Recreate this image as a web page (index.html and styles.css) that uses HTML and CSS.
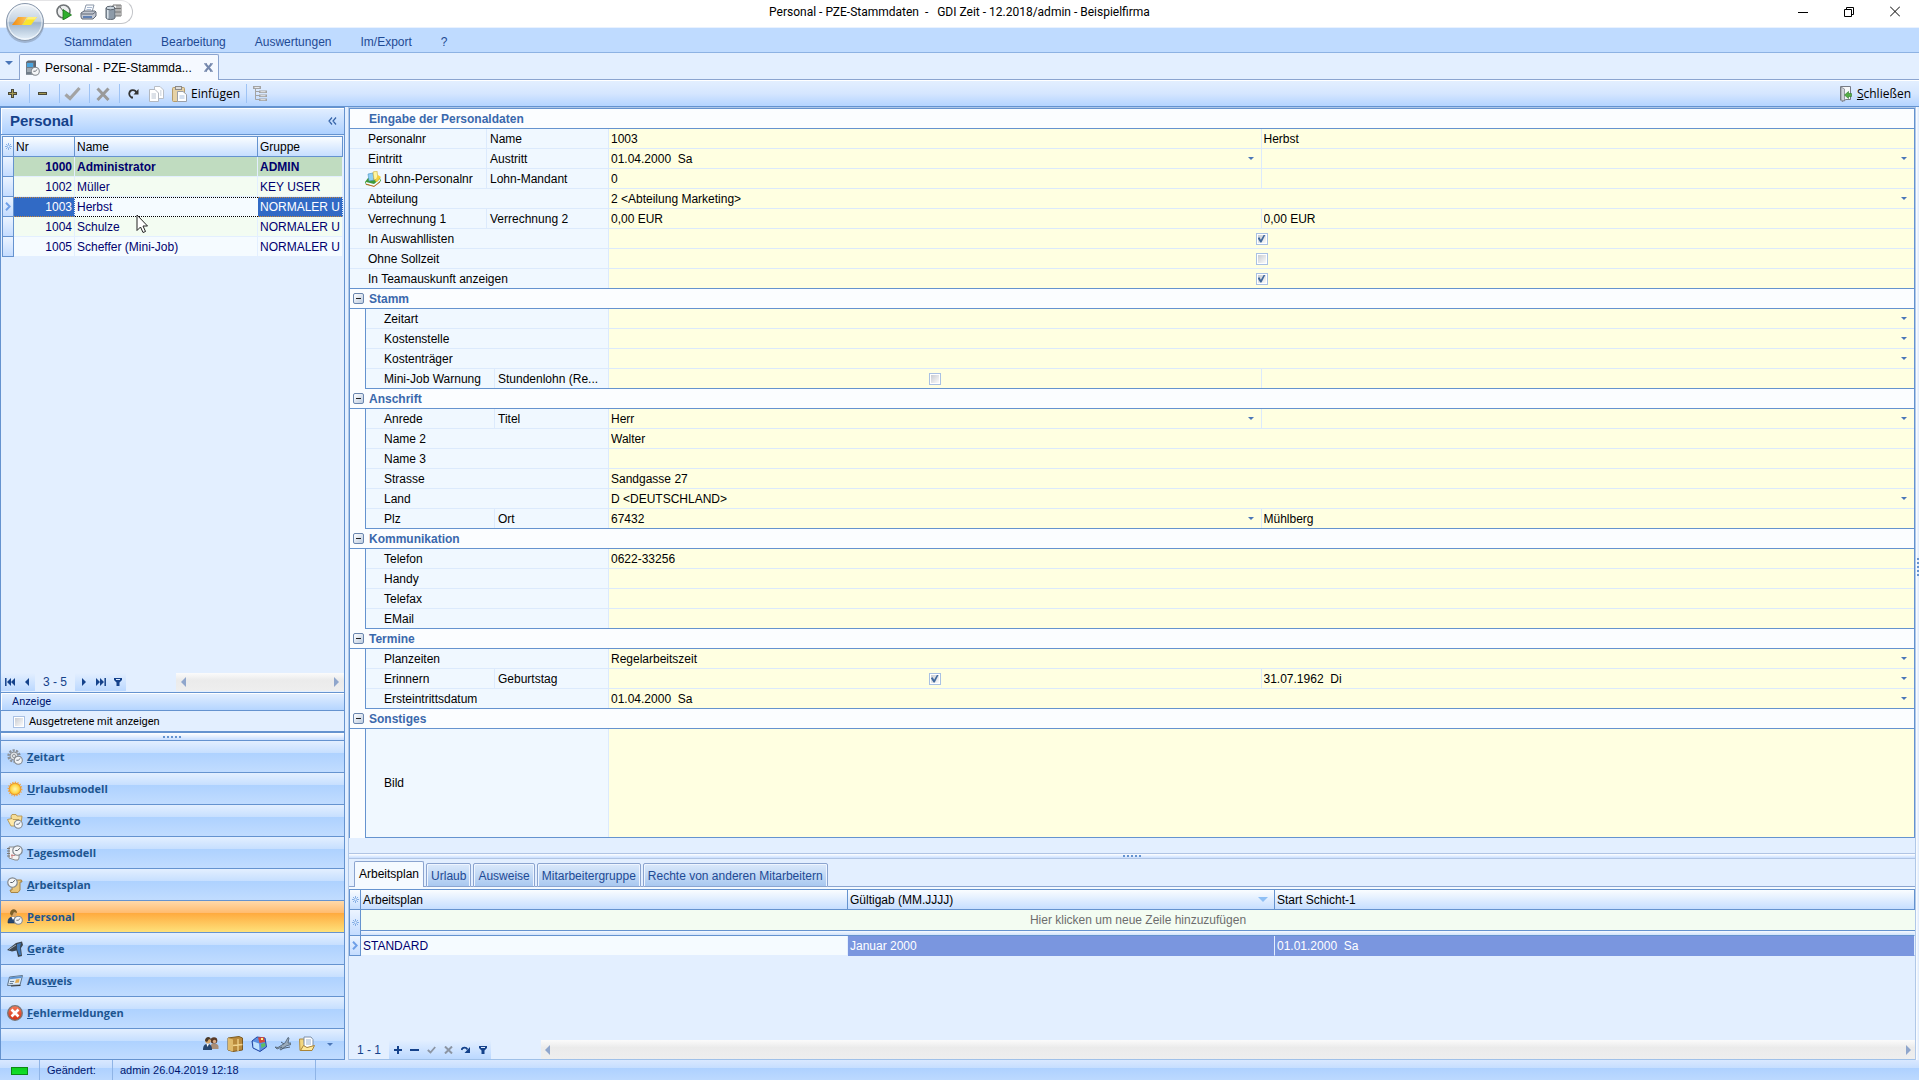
FILE: index.html
```html
<!DOCTYPE html>
<html lang="de">
<head>
<meta charset="utf-8">
<title>Personal - PZE-Stammdaten - GDI Zeit</title>
<link rel="stylesheet" href="styles.css">
</head>
<body>
<svg class="defs" aria-hidden="true">
  <defs>
    <linearGradient id="gSteel" x1="0" y1="0" x2="0" y2="1"><stop offset="0" stop-color="#f2f6fa"/><stop offset=".48" stop-color="#c3d1e0"/><stop offset=".52" stop-color="#9db3cb"/><stop offset="1" stop-color="#e8f3fc"/></linearGradient>
    <linearGradient id="gOrange"><stop offset="0" stop-color="#f08a10"/><stop offset="1" stop-color="#ffc65a"/></linearGradient>
    <radialGradient id="gSun"><stop offset="0" stop-color="#fff6b0"/><stop offset=".7" stop-color="#ffd84a"/><stop offset="1" stop-color="#f5a623"/></radialGradient>
    <linearGradient id="gRed" x1="0" y1="0" x2="0" y2="1"><stop offset="0" stop-color="#f47a5a"/><stop offset="1" stop-color="#d22f12"/></linearGradient>
  </defs>
  <symbol id="clock" viewBox="0 0 10 10"><circle cx="5" cy="5" r="4.3" fill="#f3f5f7" stroke="#82888f" stroke-width="1.1"/><path d="M5 5L7.2 3M5 5H3" stroke="#555c66" stroke-width=".9" fill="none"/></symbol>
  <symbol id="star" viewBox="0 0 7 7"><path d="M3.5 0V7M0 3.5H7M1 1L6 6M6 1L1 6" stroke="#6f9fe0" stroke-width=".8"/><rect x="2.5" y="2.5" width="2" height="2" fill="#e3efff"/></symbol>
  <symbol id="chev" viewBox="0 0 6 9"><path d="M1 .8L4.7 4.5L1 8.2" stroke="#6f9fe8" stroke-width="2" fill="none"/></symbol>
  <symbol id="funnel" viewBox="0 0 8 8"><path d="M0 0H8V2L5.500 4.500V8H2.500V4.500L0 2Z" fill="#15428b"/><path d="M2 1.500H6" stroke="#dceaff" stroke-width="1"/></symbol>
</svg>

<header class="titlebar">
  <button class="orb" aria-label="Anwendungsmenü">
    <svg width="40" height="42" viewBox="0 0 40 42"><ellipse cx="20" cy="22" rx="19" ry="19" fill="#7d8ea5" opacity=".5"/><circle cx="20" cy="20" r="18.500" fill="url(#gSteel)" stroke="#8998ac"/><circle cx="20" cy="20" r="17" fill="none" stroke="#fff" stroke-opacity=".7"/><path d="M13 15H22L17 23H7Z" fill="url(#gOrange)"/><path d="M23 15H32L26 23H17Z" fill="#fbe42c"/><path d="M23 15H32L30 17.500H21.500Z" fill="#fff07a"/></svg>
  </button>
  <div class="quick">
    <button aria-label="Start"><svg width="16" height="16" viewBox="0 0 16 16"><circle cx="7.500" cy="7.500" r="6.500" fill="#eceeef" stroke="#6f7376" stroke-width="1.600"/><path d="M7.500 7.500L4 3" stroke="#666" /><path d="M7 5.500L15.500 11L7 16Z" fill="#2eae2e" stroke="#157515" stroke-width=".8"/></svg></button>
    <button aria-label="Drucken"><svg width="17" height="16" viewBox="0 0 17 16"><path d="M6 1L14 1L12 8H4Z" fill="#fafcff" stroke="#8b97a8"/><path d="M7 3.500H12M6.500 5.500H11" stroke="#a9b9d0"/><path d="M1 9L4 7H15L16 8V12L13 15H2L1 13Z" fill="#c3c8d2" stroke="#5f6775"/><path d="M1.500 10H13L15.500 8" stroke="#5f6775" fill="none"/><path d="M3 13H12" stroke="#3f69a8" stroke-width="1.500"/></svg></button>
    <button aria-label="Datenbank"><svg width="17" height="16" viewBox="0 0 17 16"><path d="M8 1H16V12H8Z" fill="#f3f3f3" stroke="#777"/><path d="M8 4.500H16M8 8H16M12 1V12M14 1V12" stroke="#777"/><path d="M1 4V14C2 16 9 16 10 14V4Z" fill="#8d9aa8" stroke="#5d6670"/><path d="M2.800 5V14.500" stroke="#dfe8ef" stroke-width="1.500"/><ellipse cx="5.500" cy="4" rx="4.500" ry="1.800" fill="#c9d3dc" stroke="#5d6670"/></svg></button>
  </div>
  <h1>Personal - PZE-Stammdaten &nbsp;- &nbsp; GDI Zeit - 12.2018/admin - Beispielfirma</h1>
  <div class="winbtns">
    <button aria-label="Minimieren"><svg width="10" height="11" viewBox="0 0 10 11"><path d="M0 6.500H10" stroke="#000"/></svg></button>
    <button aria-label="Verkleinern"><svg width="10" height="11" viewBox="0 0 10 11"><path d="M.5 3.500H7.500V10.500H.5ZM2.500 3V1.500H9.500V8.500H8" stroke="#000" fill="none"/></svg></button>
    <button aria-label="Schließen"><svg width="10" height="11" viewBox="0 0 10 11"><path d="M0 .5L10 10.500M10 .5L0 10.500" stroke="#000"/></svg></button>
  </div>
</header>

<nav class="menu"><a href="#">Stammdaten</a><a href="#">Bearbeitung</a><a href="#">Auswertungen</a><a href="#">Im/Export</a><a href="#">?</a></nav>

<div class="doctabs">
  <button class="doclist" aria-label="Fensterliste"><i class="tri-down"></i></button>
  <div class="doctab">
    <svg width="15" height="16" viewBox="0 0 15 16"><path d="M1 2L3 .5H11V12L9 14.500H1Z" fill="#5a6470"/><path d="M1 2.500H9V14.500H1Z" fill="#6f7c89"/><path d="M2 3H8V7H2Z" fill="#4aa3dd"/><path d="M2 9H8M2 11H8" stroke="#cbd3da"/><use href="#clock" x="5.500" y="6.500" width="9.500" height="9.500"/></svg>
    <span>Personal - PZE-Stammda...</span>
    <button aria-label="Tab schließen"><svg width="9" height="9" viewBox="0 0 9 9"><path d="M1.500 1L7.500 8M7.500 1L1.500 8" stroke="#7487ac" stroke-width="2"/><path d="M0 .8H3M6 .8H9M0 8.200H3M6 8.200H9" stroke="#7487ac"/></svg></button>
  </div>
  <div class="fill"></div>
</div>

<div class="toolbar">
  <button aria-label="Neu"><svg width="9" height="9" viewBox="0 0 9 9"><path d="M3 0H6V3H9V6H6V9H3V6H0V3H3Z" fill="#4b4a3a"/><path d="M4.500 1V8M1 4.500H8" stroke="#a59a55"/></svg></button><i class="sep"></i>
  <button aria-label="Löschen"><svg width="9" height="9" viewBox="0 0 9 9"><path d="M0 3H9V6H0Z" fill="#4b4a3a"/><path d="M1 4.500H8" stroke="#a59a55"/></svg></button><i class="sep"></i>
  <button aria-label="Speichern"><svg width="17" height="15" viewBox="0 0 17 15"><path d="M1.500 8.500L6 12.500L15.500 2" stroke="#a3a3a3" stroke-width="3.200" fill="none"/></svg></button><i class="sep"></i>
  <button aria-label="Abbrechen"><svg width="14" height="14" viewBox="0 0 14 14"><path d="M1.500 1.500L12.500 13M12.500 1.500L1.500 13" stroke="#9a9a9a" stroke-width="3"/></svg></button><i class="sep"></i>
  <button class="tight first" aria-label="Aktualisieren"><svg width="11" height="11" viewBox="0 0 11 11"><path d="M5 9.500H3.500C0 7.500 .8 2.500 4.500 2.200C7 2 8.500 3.500 8.500 5.500" stroke="#333" stroke-width="1.800" fill="none"/><path d="M10.500 1V6.500H5.500Z" fill="#333"/></svg></button>
  <button class="tight" aria-label="Kopieren"><svg width="15" height="16" viewBox="0 0 15 16"><path d="M5.500 .5H11L14.500 4V12.500H5.500Z" fill="#fff" stroke="#b9bec6"/><path d="M.5 3.500H6L9.500 7V15.500H.5Z" fill="#fff" stroke="#b3b8c0"/><path d="M2.500 8H7M2.500 10H7M2.500 12H7M11 5H12.500M11 7H12.500M11 9H12.500" stroke="#b9c3d0"/></svg></button>
  <button class="paste"><svg width="15" height="16" viewBox="0 0 15 16"><rect x=".5" y="1.500" width="12" height="14" rx="1" fill="#e6d2a6" stroke="#b59c6c"/><rect x="3.500" y=".5" width="6" height="3" fill="#ddd" stroke="#8a8a8a"/><path d="M5.500 5.500H11L14.500 8.500V15.500H5.500Z" fill="#fff" stroke="#9a9fa8"/><path d="M7.500 10H12.500M7.500 12H12.500" stroke="#a9c0e0"/></svg>Einfügen</button><i class="sep"></i>
  <button aria-label="Baum"><svg width="14" height="15" viewBox="0 0 14 15"><path d="M0 0H8V3H0ZM6 4.500H14V7H6ZM6 8.500H14V11H6ZM6 12.500H14V15H6Z" fill="#a3a3a3"/><path d="M2.500 3V13.500H6M2.500 5.500H6M2.500 9.500H6" stroke="#a3a3a3" fill="none"/><path d="M1.500 1.500H6.500M7.500 5.700H12.500M7.500 9.700H12.500M7.500 13.700H12.500" stroke="#e4e6ea"/></svg></button>
  <button class="close"><svg width="12" height="16" viewBox="0 0 12 16"><path d="M.5 .5H10.500V13.500H6L2 15.500L.5 14Z" fill="#f6f8fa" stroke="#777b85"/><path d="M1 1L4.500 3V15L1 14Z" fill="#cfd3da" stroke="#777b85" stroke-width=".7"/><path d="M4.500 9L8.500 5.500V7.500H11.500V10.500H8.500V12.500Z" fill="#55ad45" stroke="#2f7a2a" stroke-width=".6"/></svg><span><u>S</u>chließen</span></button>
</div>

<main>
  <aside>
    <div class="phead"><h2>Personal</h2><button aria-label="Einklappen"><svg width="9" height="8" viewBox="0 0 9 8"><path d="M4 .5L1 4L4 7.500M8 .5L5 4L8 7.500" stroke="#3563a8" stroke-width="1.200" fill="none"/></svg></button></div>
    <div class="gridarea">
      <table class="people">
        <colgroup><col class="ci"><col class="cnr"><col class="cname"><col></colgroup>
        <thead><tr><th><svg width="7" height="7"><use href="#star"/></svg></th><th>Nr</th><th>Name</th><th>Gruppe</th></tr></thead>
        <tbody>
          <tr class="admin"><th></th><td>1000</td><td>Administrator</td><td>ADMIN</td></tr>
          <tr class="odd"><th></th><td>1002</td><td>Müller</td><td>KEY USER</td></tr>
          <tr class="sel"><th><svg width="6" height="9"><use href="#chev"/></svg></th><td>1003</td><td>Herbst</td><td>NORMALER U</td></tr>
          <tr class="odd"><th></th><td>1004</td><td>Schulze</td><td>NORMALER U</td></tr>
          <tr><th></th><td>1005</td><td>Scheffer (Mini-Job)</td><td>NORMALER U</td></tr>
        </tbody>
      </table>
      <svg class="pointer" width="13" height="20" viewBox="0 0 13 20"><path d="M1 1V16.500L4.500 13L7 18.500L9.500 17.500L7 12H11.500Z" fill="#fff" stroke="#222"/></svg>
    </div>
    <div class="pager">
      <div class="pg"><button aria-label="Erster"><svg width="10" height="8" viewBox="0 0 10 8"><path d="M.8 0V8" stroke="#15428b" stroke-width="1.500"/><path d="M6 0V8L2 4ZM10 0V8L6 4Z" fill="#15428b"/></svg></button><button aria-label="Zurück"><svg width="10" height="8" viewBox="0 0 10 8"><path d="M7 0V8L3 4Z" fill="#15428b"/></svg></button></div>
      <span>3 - 5</span>
      <div class="pg"><button aria-label="Weiter"><svg width="10" height="8" viewBox="0 0 10 8"><path d="M3 0V8L7 4Z" fill="#15428b"/></svg></button><button aria-label="Letzter"><svg width="10" height="8" viewBox="0 0 10 8"><path d="M9.200 0V8" stroke="#15428b" stroke-width="1.500"/><path d="M0 0V8L4 4ZM4 0V8L8 4Z" fill="#15428b"/></svg></button><button aria-label="Filter"><svg width="8" height="8"><use href="#funnel"/></svg></button></div>
      <div class="hscroll"><i class="tri-left"></i><i class="tri-right"></i></div>
    </div>
    <fieldset class="anzeige">
      <div class="ahead">Anzeige</div>
      <label><input type="checkbox">Ausgetretene mit anzeigen</label>
    </fieldset>
    <div class="split"><i class="dots"></i></div>
    <nav class="modules">
      <a href="#"><svg width="16" height="16" viewBox="0 0 16 16"><circle cx="7" cy="7" r="5.500" fill="none" stroke="#8b9198" stroke-width="2.400" stroke-dasharray="2.200 1.200"/><circle cx="7" cy="7" r="4" fill="#d9dde0" stroke="#8b9198"/><circle cx="7" cy="7" r="1.500" fill="#fff" stroke="#8b9198"/><use href="#clock" x="6.500" y="6.500" width="9.500" height="9.500"/></svg><span><u>Z</u>eitart</span></a>
      <a href="#"><svg width="16" height="16" viewBox="0 0 16 16"><circle cx="8" cy="8" r="6.700" fill="none" stroke="#f0a848" stroke-width="1.500" stroke-dasharray="1.300 1.300"/><circle cx="8" cy="8" r="5.800" fill="url(#gSun)" stroke="#ee9a2a"/></svg><span><u>U</u>rlaubsmodell</span></a>
      <a href="#"><svg width="16" height="16" viewBox="0 0 16 16"><path d="M4 3L5 1.500H9L10 3H15L14 11H5Z" fill="#f5dd98" stroke="#b08c40" stroke-width=".8"/><path d="M.5 6.500L5 5.500L6 6.500H12L10 13H4Z" fill="#ffe9a8" stroke="#b08c40" stroke-width=".8"/><use href="#clock" x="6.500" y="6.500" width="9.500" height="9.500"/></svg><span>Zeitk<u>o</u>nto</span></a>
      <a href="#"><svg width="16" height="16" viewBox="0 0 16 16"><path d="M2 2H12V13L11 15H8L2 13Z" fill="#f4f4f4" stroke="#8a8a8a"/><path d="M0 3.500H3M0 6H3M0 8.500H3M0 11H3" stroke="#777"/><path d="M5 9V13M4 10.500H8" stroke="#c88"/><use href="#clock" x="5" y="0" width="11" height="11"/></svg><span><u>T</u>agesmodell</span></a>
      <a href="#"><svg width="16" height="16" viewBox="0 0 16 16"><path d="M5 3H14.500L15 5H13V13L11 15.500H4L3 13H5Z" fill="#e8c57c" stroke="#a07c38" stroke-width=".9"/><use href="#clock" x="0" y="0" width="11" height="11"/></svg><span><u>A</u>rbeitsplan</span></a>
      <a href="#" class="on"><svg width="16" height="16" viewBox="0 0 16 16"><path d="M1 14C1 9 3 8 6 8S11 9 11 14Z" fill="#27466f" stroke="#1a3050" stroke-width=".6"/><path d="M4.500 8L6 11L8 8Z" fill="#fff"/><circle cx="6.500" cy="4.500" r="3.200" fill="#d9a76a"/><path d="M3 5C3 -1 10 -1 10 4L7 3L5 7Z" fill="#7d6028"/><use href="#clock" x="6.500" y="6.500" width="9.500" height="9.500"/></svg><span><u>P</u>ersonal</span></a>
      <a href="#"><svg width="16" height="16" viewBox="0 0 16 16"><path d="M0 9L9 2L15 .5L16 4L14 7L15 15L11 16L9.500 9.500L5 10.500Z" fill="#3b454f"/><path d="M10 3L14 2L13 6L14 14H12L10 8Z" fill="#3f78b8"/><path d="M2 8.500L9 4" stroke="#9aa8b5"/></svg><span><u>G</u>eräte</span></a>
      <a href="#"><svg width="16" height="16" viewBox="0 0 16 16"><path d="M2.500 4L15.500 2.500L13 12L.5 12.500Z" fill="#dce9f5" stroke="#5e7388"/><path d="M3 4.200L15 3L14.600 5L2.500 6.200Z" fill="#5d93cf"/><path d="M9 6.500L12.500 6L12 9.500L8 10Z" fill="#e1a94e"/><path d="M3 8.500H7M2.500 10.500H6" stroke="#6c8298"/><path d="M4 13L13.500 12.500" stroke="#333"/></svg><span>Aus<u>w</u>eis</span></a>
      <a href="#"><svg width="16" height="16" viewBox="0 0 16 16"><circle cx="8" cy="8" r="7.300" fill="url(#gRed)" stroke="#777" stroke-width="1.300"/><path d="M4.500 4.500L11.500 11.500M11.500 4.500L4.500 11.500" stroke="#fff" stroke-width="2.600"/></svg><span><u>F</u>ehlermeldungen</span></a>
    </nav>
    <div class="modbar">
      <button aria-label="Mitarbeiter"><svg width="16" height="16" viewBox="0 0 16 16"><circle cx="11" cy="4.500" r="3.300" fill="#5a3a26"/><circle cx="11.500" cy="5.500" r="1.700" fill="#d9ab86"/><path d="M8 13V9C9 7 14 7 15.500 10V13Z" fill="#a98e78"/><path d="M0 14C0 9 2 8 4.500 8S9 9 9 14Z" fill="#27466f"/><path d="M3.500 8L4.500 11L6 8Z" fill="#fff"/><circle cx="5" cy="4.800" r="2.800" fill="#d9a76a"/><path d="M2 5C2 0 8 0 8 4L6 3L4 6Z" fill="#4a3a2a"/></svg></button>
      <button aria-label="Lager"><svg width="16" height="16" viewBox="0 0 16 16"><path d="M1 2L12 .5L15.500 2V14L6 15.500L1 14Z" fill="#b98a3c" stroke="#7c5a20"/><path d="M1 2L6 3.500V15.500L1 14Z" fill="#e0bb6c"/><path d="M6 9.500L15.500 8.500M11 3V15" stroke="#f1d48e" stroke-width="1.300"/></svg></button>
      <button aria-label="Würfel"><svg width="16" height="16" viewBox="0 0 16 16"><path d="M1 5L6 1L14 2L15.500 11L9 15.500L2 12Z" fill="#5b8fe0" stroke="#2546a0"/><path d="M2 5.500L8 7.500L8.500 14.500L2.500 11.500Z" fill="#bfe2ff"/><path d="M7 1.500L13 1L14 6L8.500 7Z" fill="#d84a3a"/><path d="M10 8L14 7L14.500 10L10.500 12Z" fill="#5cc060"/><path d="M10 2H12V4H10Z" fill="#fff08a"/></svg></button>
      <button aria-label="Reisen"><svg width="16" height="16" viewBox="0 0 16 16"><path d="M0 11L3 11.500L10 7L13 1.500L14 2L13 7L16 7V8.500L11 10L6 14L5 13.500L7 11L2 13Z" fill="#9aabbb" stroke="#4d5e70" stroke-width=".8"/><path d="M7 12.500L15 11M6 6L9 8" stroke="#4d5e70"/></svg></button>
      <button aria-label="Ordner"><svg width="16" height="16" viewBox="0 0 16 16"><path d="M.5 3H5L6 14.500H1Z" fill="#f3d67e" stroke="#b08c40"/><path d="M5 1H12L14 3.500V12H5Z" fill="#fff" stroke="#7f90a8"/><path d="M7 4H12M7 6H12M7 8H12" stroke="#9bb2d0"/><path d="M1.500 14.500L4.500 9.500L8 11.500L15.500 9.500L13 14.500Z" fill="#ffe89a" stroke="#a98438"/></svg></button>
      <button aria-label="Mehr"><i class="tri-small"></i></button>
    </div>
  </aside>

  <section class="work">
    <form class="vgrid">
      <h3 class="head top">Eingabe der Personaldaten</h3>
      <div class="rows">
        <div class="row"><label for="f1">Personalnr</label><label for="f2">Name</label><div class="val"><input id="f1" value="1003"></div><div class="val"><input id="f2" value="Herbst"></div></div>
        <div class="row"><label for="f3">Eintritt</label><label for="f4">Austritt</label><div class="val dd"><input id="f3" value="01.04.2000  Sa"></div><div class="val dd"><input id="f4"></div></div>
        <div class="row"><label for="f5" class="ic"><svg width="16" height="16" viewBox="0 0 16 16"><path d="M0 11L3 7L15 7L16 10L9 15L1 14Z" fill="#3f9a3a"/><path d="M1 11L9 13L15 8V10L9 15L1 13Z" fill="#f6fbff"/><path d="M1 13L9 15.500L15 11" stroke="#c66a20" fill="none"/><path d="M3 3L8 2L9 9L4 10Z" fill="#8ed0f5" stroke="#4a90c0" stroke-width=".6"/><path d="M8 1L12 0L13 8L9 9Z" fill="#fdf5a0" stroke="#c9a738" stroke-width=".6"/><path d="M13 4L16 6L12 11L10 10Z" fill="#f5cf3c"/></svg>Lohn-Personalnr</label><label for="f6">Lohn-Mandant</label><div class="val"><input id="f5" value="0"></div><div class="val"><input id="f6"></div></div>
        <div class="row"><label for="f7" class="w">Abteilung</label><div class="val w dd"><select id="f7"><option>2 &lt;Abteilung Marketing&gt;</option></select></div></div>
        <div class="row"><label for="f8">Verrechnung 1</label><label for="f9">Verrechnung 2</label><div class="val"><input id="f8" value="0,00 EUR"></div><div class="val"><input id="f9" value="0,00 EUR"></div></div>
        <div class="row"><label for="f10" class="w">In Auswahllisten</label><div class="val w chk"><input id="f10" type="checkbox" checked></div></div>
        <div class="row"><label for="f11" class="w">Ohne Sollzeit</label><div class="val w chk"><input id="f11" type="checkbox"></div></div>
        <div class="row"><label for="f12" class="w">In Teamauskunft anzeigen</label><div class="val w chk"><input id="f12" type="checkbox" checked></div></div>
      </div>
      <h3 class="head"><button type="button" class="tog" aria-label="Stamm zuklappen"></button>Stamm</h3>
      <div class="rows sub">
        <div class="row"><label for="g1" class="w">Zeitart</label><div class="val w dd"><select id="g1"><option></option></select></div></div>
        <div class="row"><label for="g2" class="w">Kostenstelle</label><div class="val w dd"><select id="g2"><option></option></select></div></div>
        <div class="row"><label for="g3" class="w">Kostenträger</label><div class="val w dd"><select id="g3"><option></option></select></div></div>
        <div class="row"><label for="g4">Mini-Job Warnung</label><label for="g5">Stundenlohn (Re...</label><div class="val chk"><input id="g4" type="checkbox"></div><div class="val"><input id="g5"></div></div>
      </div>
      <h3 class="head"><button type="button" class="tog" aria-label="Anschrift zuklappen"></button>Anschrift</h3>
      <div class="rows sub">
        <div class="row"><label for="h1">Anrede</label><label for="h2">Titel</label><div class="val dd"><select id="h1"><option>Herr</option></select></div><div class="val dd"><select id="h2"><option></option></select></div></div>
        <div class="row"><label for="h3" class="w">Name 2</label><div class="val w"><input id="h3" value="Walter"></div></div>
        <div class="row"><label for="h4" class="w">Name 3</label><div class="val w"><input id="h4"></div></div>
        <div class="row"><label for="h5" class="w">Strasse</label><div class="val w"><input id="h5" value="Sandgasse 27"></div></div>
        <div class="row"><label for="h6" class="w">Land</label><div class="val w dd"><select id="h6"><option>D &lt;DEUTSCHLAND&gt;</option></select></div></div>
        <div class="row"><label for="h7">Plz</label><label for="h8">Ort</label><div class="val dd"><select id="h7"><option>67432</option></select></div><div class="val"><input id="h8" value="Mühlberg"></div></div>
      </div>
      <h3 class="head"><button type="button" class="tog" aria-label="Kommunikation zuklappen"></button>Kommunikation</h3>
      <div class="rows sub">
        <div class="row"><label for="k1" class="w">Telefon</label><div class="val w"><input id="k1" value="0622-33256"></div></div>
        <div class="row"><label for="k2" class="w">Handy</label><div class="val w"><input id="k2"></div></div>
        <div class="row"><label for="k3" class="w">Telefax</label><div class="val w"><input id="k3"></div></div>
        <div class="row"><label for="k4" class="w">EMail</label><div class="val w"><input id="k4"></div></div>
      </div>
      <h3 class="head"><button type="button" class="tog" aria-label="Termine zuklappen"></button>Termine</h3>
      <div class="rows sub">
        <div class="row"><label for="t1" class="w">Planzeiten</label><div class="val w dd"><select id="t1"><option>Regelarbeitszeit</option></select></div></div>
        <div class="row"><label for="t2">Erinnern</label><label for="t3">Geburtstag</label><div class="val chk"><input id="t2" type="checkbox" checked></div><div class="val dd"><input id="t3" value="31.07.1962  Di"></div></div>
        <div class="row"><label for="t4" class="w">Ersteintrittsdatum</label><div class="val w dd"><input id="t4" value="01.04.2000  Sa"></div></div>
      </div>
      <h3 class="head"><button type="button" class="tog" aria-label="Sonstiges zuklappen"></button>Sonstiges</h3>
      <div class="rows sub">
        <div class="row pic"><span class="lab w">Bild</span><div class="val w"></div></div>
      </div>
    </form>

    <div class="split hs"><i class="dots"></i></div>

    <div class="detail">
      <div class="tabs"><i class="lead"></i><button class="tab on">Arbeitsplan</button><i class="tabgap"></i><button class="tab">Urlaub</button><i class="tabgap"></i><button class="tab">Ausweise</button><i class="tabgap"></i><button class="tab">Mitarbeitergruppe</button><i class="tabgap"></i><button class="tab">Rechte von anderen Mitarbeitern</button><i class="fill"></i></div>
      <table class="plans">
        <colgroup><col class="ci"><col class="cp"><col class="cg"><col></colgroup>
        <thead><tr><th><svg width="7" height="7"><use href="#star"/></svg></th><th>Arbeitsplan</th><th><div class="sorted">Gültigab (MM.JJJJ)<i class="tri-sort"></i></div></th><th>Start Schicht-1</th></tr></thead>
        <tbody>
          <tr class="new"><th rowspan="2"><svg width="7" height="7"><use href="#star"/></svg></th><td colspan="3">Hier klicken um neue Zeile hinzuzufügen</td></tr>
          <tr class="gap"><td colspan="3"></td></tr>
          <tr class="data"><th><svg width="6" height="9"><use href="#chev"/></svg></th><td>STANDARD</td><td>Januar 2000</td><td>01.01.2000&nbsp; Sa</td></tr>
        </tbody>
      </table>
      <div class="pager low">
        <span>1 - 1</span>
        <div class="pg"><button aria-label="Neu"><svg width="8" height="8" viewBox="0 0 8 8"><path d="M4 0V8M0 4H8" stroke="#15428b" stroke-width="2"/></svg></button><button aria-label="Löschen"><svg width="9" height="8" viewBox="0 0 9 8"><path d="M0 4H9" stroke="#15428b" stroke-width="2"/></svg></button><button aria-label="Speichern"><svg width="9" height="8" viewBox="0 0 9 8"><path d="M.8 4L3.500 6.500L8.200 1" stroke="#8c95a3" stroke-width="1.800" fill="none"/></svg></button><button aria-label="Abbrechen"><svg width="9" height="8" viewBox="0 0 9 8"><path d="M1 .5L8 7.500M8 .5L1 7.500" stroke="#8c95a3" stroke-width="2"/></svg></button><button aria-label="Aktualisieren"><svg width="9" height="8" viewBox="0 0 9 8"><path d="M.5 4C1.500 1 5 .8 6.500 3.500" stroke="#15428b" stroke-width="1.800" fill="none"/><path d="M9 1V7H3.500Z" fill="#15428b"/></svg></button><button aria-label="Filter"><svg width="8" height="8"><use href="#funnel"/></svg></button></div>
        <div class="hscroll"><i class="tri-left"></i><i class="tri-right"></i></div>
      </div>
    </div>
  </section>
  <div class="edge"><i class="vdots"></i></div>
</main>

<footer class="status"><div class="led"><i></i></div><div class="lbl">Geändert:</div><div class="who">admin 26.04.2019 12:18</div></footer>
</body>
</html>
```
FILE: styles.css
```css
:root {
  --line: #6593cf;
  --soft: #e3efff;
  --sans: "Liberation Sans", Arial, sans-serif;
  --ui: "Open Sans", "Noto Sans", sans-serif;
  --narrow: Roboto, "Open Sans", sans-serif;
}
* { box-sizing: border-box; }
body {
  margin: 0;
  min-height: 100vh;
  display: flex;
  flex-direction: column;
  background: var(--soft);
  font: 12px/16px var(--sans);
  color: #000;
}
button, input, select { font: inherit; color: inherit; }
button { border: 0; padding: 0; background: none; }
svg { display: block; flex: none; }
a { color: inherit; text-decoration: none; }
h1, h2, h3 { margin: 0; font-size: 12px; }
.defs { position: absolute; width: 0; height: 0; }
.fill { flex: 1; }

/* window frame */
.titlebar {
  position: relative;
  display: grid;
  grid-template-columns: 1fr auto 1fr;
  height: 28px;
  background: #fff;
  border-bottom: 1px solid #e9f2ff;
}
.orb { position: absolute; left: 5px; top: 2px; z-index: 2; }
.quick {
  display: flex;
  align-items: center;
  gap: 8px;
  width: 113px;
  height: 24px;
  margin-left: 20px;
  padding-left: 36px;
  border: 1px solid #c2c4c8;
  border-top-color: #e4e4e6;
  border-left: 0;
  border-radius: 0 12px 12px 0;
}
.titlebar h1 { font: 12px/24px var(--narrow); }
.winbtns { display: flex; justify-content: flex-end; gap: 36px; padding: 0 19px 4px 0; }

.menu {
  display: flex;
  gap: 29px;
  height: 25px;
  padding: 6px 0 0 64px;
  background: #bfdbff;
  border-bottom: 1px solid #8db2e3;
  color: #1e4a94;
}

.doctabs { display: flex; height: 28px; padding-top: 1px; border-bottom: 1px solid #fff; }
.doclist { width: 19px; padding: 7px 0 0 5px; align-self: stretch; display: flex; border-bottom: 1px solid #8ba4cf; }
.doctabs .fill { border-bottom: 1px solid #8ba4cf; }
.doctab {
  display: flex;
  align-items: center;
  width: 200px;
  padding-left: 5px;
  background: #f5f9ff;
  border: 1px solid #8ba4cf;
  border-bottom: 0;
  border-radius: 2px 2px 0 0;
}
.doctab span { padding-left: 5px; flex: 1; }
.doctab button { padding-right: 5px; }

.toolbar {
  display: flex;
  align-items: center;
  height: 26px;
  background: linear-gradient(#e3efff, #d5e6ff 50%, #b4d4ff);
  border-bottom: 1px solid var(--line);
  font: 12px/16px var(--ui);
}
.toolbar button { display: flex; align-items: center; justify-content: center; width: 29px; height: 100%; padding-right: 4px; }
.toolbar .tight { width: 23px; padding: 0; }
.toolbar .first { margin-left: 2px; }
.toolbar .paste { width: auto; gap: 4px; padding: 0 6px 0 4px; }
.toolbar .close { width: auto; margin-left: auto; gap: 5px; padding-right: 8px; }
.sep { width: 1px; height: 19px; background: #9ec3f5; }

.tri-down, .tri-small, .tri-sort, .tri-left, .tri-right { display: block; width: 0; height: 0; border: 0 solid transparent; }
.tri-down { border-width: 4px 4px 0; border-top-color: #4a76b8; }
.tri-small { border-width: 3px 3px 0; border-top-color: #4a76b8; }
.tri-sort { border-width: 5px 5px 0; border-top-color: #8fc0f5; }
.tri-left { border-width: 5px 5px 5px 0; border-right-color: #8fa6cc; }
.tri-right { border-width: 5px 0 5px 5px; border-left-color: #8fa6cc; }

main { display: flex; flex: 1; }

/* left panel */
aside {
  flex: 0 0 345px;
  display: flex;
  flex-direction: column;
  margin-right: 3px;
  border: 1px solid var(--line);
}
.phead {
  display: flex;
  align-items: center;
  justify-content: space-between;
  height: 27px;
  padding: 0 7px 0 9px;
  background: linear-gradient(#e3efff, #aed1ff);
  border-bottom: 1px solid var(--line);
  box-shadow: inset 1px 1px #fff;
}
.phead h2 { font: bold 15px/20px var(--sans); color: #15428b; }
.gridarea { position: relative; flex: 1; padding: 1px; }
.pointer { position: absolute; left: 135px; top: 79px; }

table { width: 100%; border-collapse: separate; border-spacing: 0; table-layout: fixed; border: solid var(--line); border-width: 1px 0 0 1px; }
th, td { height: 20px; padding: 0 2px; line-height: 16px; white-space: nowrap; overflow: hidden; text-align: left; }
th svg { margin: 0 auto; }
th { font-weight: normal; background: linear-gradient(#fafdff, #c6deff); border: solid var(--line); border-width: 0 1px 1px 0; }
tbody th { background: linear-gradient(#ecf4ff, #c4dcff); padding: 0; }
th:first-child { padding: 0; }
td { color: #00006e; background: #f5fbff; border: solid #e3efff; border-width: 0 1px 1px 0; }
.ci { width: 11px; }
.cnr { width: 61px; }
.cname { width: 183px; }
.people td:nth-child(2) { text-align: right; }
.people .odd td { background: #f3fcf2; }
.people .admin td { background: #c0dcc0; font-weight: bold; }
.people .sel td { background: #316ac5; color: #fff; border: dotted #c98a3a; border-width: 1px 1px 1px 0; border-right-color: #e3efff; }
.people .sel td:nth-child(3) { background: #f5fbff; color: #00006e; border: dotted #000; border-width: 1px 0; }

.pager { display: flex; align-items: stretch; height: 19px; padding: 0 0 1px 0; color: #15428b; }
.pager span { align-self: center; padding: 0 8px; }
.pg { display: flex; background: linear-gradient(#e3efff, #bbd8ff); }
.pg button { display: grid; place-items: center; width: 17px; }
.hscroll {
  flex: 1;
  display: flex;
  align-items: center;
  justify-content: space-between;
  margin-left: 50px;
  padding: 0 5px;
  background: linear-gradient(#fbfbfb, #ebebeb 40%, #eeeeee);
}

.anzeige { margin: 0; padding: 0; border: 0; border-top: 1px solid var(--line); border-bottom: 2px solid var(--line); font: 11px/18px var(--narrow); }
.ahead { height: 18px; padding-left: 11px; color: #00156e; background: linear-gradient(#e3efff, #b5d5ff); border-bottom: 1px solid var(--line); box-shadow: inset 1px 1px #fff; }
.anzeige label { display: flex; align-items: center; gap: 4px; height: 20px; padding: 1px 0 0 12px; }

.split { display: flex; justify-content: center; align-items: center; height: 7px; background: linear-gradient(#fff, #c8deff); }
.dots { width: 19px; height: 2px; background: repeating-linear-gradient(90deg, var(--line) 0 2px, transparent 2px 4px); }

.modules a, .modbar {
  display: flex;
  align-items: center;
  height: 32px;
  border-top: 1px solid var(--line);
  background: linear-gradient(#e3efff, #c6dfff 39%, #aed2ff 40%, #c1dcff);
}
.modules a { gap: 4px; padding-left: 6px; font: bold 11px/16px var(--ui); color: #1d5590; }
.modules .on { background: linear-gradient(#ffd9aa, #ffbb6e 39%, #ffab3f 40%, #fee17a); }
.modbar { height: 31px; gap: 8px; justify-content: flex-end; padding-right: 10px; }
.modbar .tri-small { margin: 0 1px 0 4px; }

/* record form */
.work { flex: 1; min-width: 0; display: flex; flex-direction: column; border: solid #b0c8e8; border-width: 1px 1px 0; }
.vgrid { margin-bottom: 15px; border: 1px solid var(--line); border-bottom: 0; background: #fbfdff; }
.head {
  display: flex;
  align-items: center;
  gap: 5px;
  height: 20px;
  padding-left: 3px;
  border-bottom: 1px solid var(--line);
  background: #fbfdff;
  color: #3a68ac;
}
.head.top { padding-left: 19px; }
.tog {
  width: 11px;
  height: 11px;
  border: 1px solid #6a86ae;
  border-radius: 2px;
  background: linear-gradient(#222, #222) center / 5px 1px no-repeat, linear-gradient(135deg, #fff, #bccbe0);
}
.rows { --a: 137px; --b: 122px; }
.rows.sub { --a: 129px; --b: 114px; margin-left: 15px; border-left: 1px solid var(--line); }
.row { display: grid; grid-template-columns: var(--a) var(--b) minmax(0, 1fr) minmax(0, 1fr); height: 20px; border-bottom: 1px solid #dceafc; }
.row:last-child { border-bottom-color: var(--line); }
.row.pic { height: 109px; }
.row label, .lab { display: flex; align-items: center; padding-left: 3px; background: #f0f8ff; border-right: 1px solid #dceafc; white-space: nowrap; }
.row > :first-child { padding-left: 18px; }
.row > .ic { gap: 3px; padding-left: 15px; }
.row .w { grid-column: span 2; }
.val { display: flex; align-items: center; background: #ffffe1; }
.val:not(:last-child) { border-right: 1px solid #dceafc; }
.val input:not([type]), .val select {
  flex: 1;
  min-width: 0;
  height: 18px;
  padding: 0 0 0 2px;
  margin: 0;
  border: 0;
  background: none;
  appearance: none;
}
.dd::after { content: ""; margin-right: 7px; border: solid transparent; border-width: 3px 3px 0; border-top-color: #4a76b8; }
.val.chk { justify-content: center; }
input[type="checkbox"] {
  appearance: none;
  display: grid;
  place-items: center;
  width: 12px;
  height: 12px;
  margin: 0;
  border: 1px solid #a9c1e4;
  background: linear-gradient(135deg, #c9ccd2, #fbfbfb) center / 8px 8px no-repeat, #fff;
}
input[type="checkbox"]:checked::before {
  content: "";
  width: 8px;
  height: 8px;
  background: #41699c;
  clip-path: polygon(0 45%, 25% 35%, 42% 65%, 80% 0, 100% 0, 50% 100%, 35% 100%);
}

/* detail grid */
.hs { height: 6px; border: solid #b0c4e4; border-width: 1px 0; }
.detail { flex: 1; display: flex; flex-direction: column; }
.tabs { display: flex; align-items: flex-end; height: 30px; padding: 2px 0 2px; background: linear-gradient(#f5faff, #f5faff) bottom / 100% 2px no-repeat; }
.tabs i { align-self: stretch; border-bottom: 1px solid #8ba4cf; }
.lead { width: 5px; }
.tabgap { width: 2px; }
.tab {
  height: 24px;
  padding: 1px 4px 0;
  color: #1e4a94;
  background: linear-gradient(#dbe9fb, #a9c8f0);
  border: 1px solid #8ba4cf;
  border-radius: 2px 2px 0 0;
  box-shadow: inset 1px 1px #eef5ff, inset -1px 0 #eef5ff;
}
.tab.on { height: 26px; padding: 0 4px 1px; color: #000; background: #f5faff; border-bottom: 0; box-shadow: none; }
.cp { width: 487px; }
.cg { width: 427px; }
.sorted { display: flex; align-items: center; justify-content: space-between; padding-right: 4px; }
.new td { height: 21px; text-align: center; color: #6d6d6d; background: #f3fcf2; border-bottom-color: var(--line); border-right: 0; }
.gap td { height: 5px; padding: 0; background: linear-gradient(#f4f9ff, #cfe2fb); border-bottom-color: var(--line); }
.data td:nth-child(n+3) { background: #7a96df; color: #fff; border-bottom-color: #7a96df; }
.low { margin-top: auto; padding: 0; border-bottom: 1px solid #9fc0e8; height: 20px; }
.low .hscroll { margin-left: 50px; padding: 0 4px; }

.edge { width: 3px; display: grid; align-items: center; padding-bottom: 34px; background: linear-gradient(90deg, #fff, #dbe9fc); }
.vdots { width: 2px; height: 18px; margin-left: 1px; background: repeating-linear-gradient(var(--line) 0 2px, transparent 2px 4px); }

.status { display: flex; height: 20px; font-size: 11px; line-height: 21px; color: #00156e; background: linear-gradient(#d9e8ff, #c6deff 40%, #aed1ff 41%, #bcd9ff); }
.status div { padding-left: 7px; border-right: 1px solid #8fb4e6; }
.status .led { padding: 7px 11px 0; }
.led i { display: block; width: 17px; height: 8px; border: 1px solid #0a8a12; background: linear-gradient(#0ccf20, #12e028); }
.status .lbl { width: 73px; }
.status .who { width: 203px; }
```
